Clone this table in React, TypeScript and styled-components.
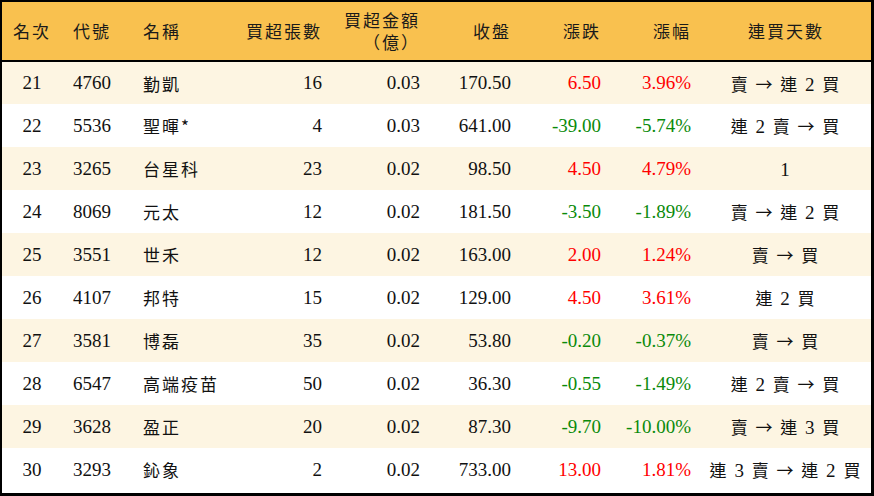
import styled, { createGlobalStyle } from "styled-components";

const GlobalStyle = createGlobalStyle`
    html, body {
        margin: 0;
        padding: 0;
        background: #ffffff;
    }
    body {
        font-family: "Liberation Serif", "Noto Sans CJK TC", serif;
    }
`;

type Align = "left" | "center" | "right";

interface Row {
    rank: number;
    code: string;
    name: string;
    lots: number;
    amount: string;
    close: string;
    change: string;
    pct: string;
    streak: string;
}

const rows: Row[] = [
    { rank: 21, code: "4760", name: "勤凱", lots: 16, amount: "0.03", close: "170.50", change: "6.50", pct: "3.96%", streak: "賣 → 連 2 買" },
    { rank: 22, code: "5536", name: "聖暉*", lots: 4, amount: "0.03", close: "641.00", change: "-39.00", pct: "-5.74%", streak: "連 2 賣 → 買" },
    { rank: 23, code: "3265", name: "台星科", lots: 23, amount: "0.02", close: "98.50", change: "4.50", pct: "4.79%", streak: "1" },
    { rank: 24, code: "8069", name: "元太", lots: 12, amount: "0.02", close: "181.50", change: "-3.50", pct: "-1.89%", streak: "賣 → 連 2 買" },
    { rank: 25, code: "3551", name: "世禾", lots: 12, amount: "0.02", close: "163.00", change: "2.00", pct: "1.24%", streak: "賣 → 買" },
    { rank: 26, code: "4107", name: "邦特", lots: 15, amount: "0.02", close: "129.00", change: "4.50", pct: "3.61%", streak: "連 2 買" },
    { rank: 27, code: "3581", name: "博磊", lots: 35, amount: "0.02", close: "53.80", change: "-0.20", pct: "-0.37%", streak: "賣 → 買" },
    { rank: 28, code: "6547", name: "高端疫苗", lots: 50, amount: "0.02", close: "36.30", change: "-0.55", pct: "-1.49%", streak: "連 2 賣 → 買" },
    { rank: 29, code: "3628", name: "盈正", lots: 20, amount: "0.02", close: "87.30", change: "-9.70", pct: "-10.00%", streak: "賣 → 連 3 買" },
    { rank: 30, code: "3293", name: "鈊象", lots: 2, amount: "0.02", close: "733.00", change: "13.00", pct: "1.81%", streak: "連 3 賣 → 連 2 買" },
];

const columns: { width: number; align: Align; pl: number; pr: number }[] = [
    { width: 60, align: "center", pl: 0, pr: 0 },
    { width: 60, align: "center", pl: 0, pr: 0 },
    { width: 100, align: "left", pl: 21, pr: 0 },
    { width: 110, align: "right", pl: 0, pr: 10 },
    { width: 98, align: "right", pl: 0, pr: 10 },
    { width: 91, align: "right", pl: 0, pr: 10 },
    { width: 90, align: "right", pl: 0, pr: 10 },
    { width: 90, align: "right", pl: 0, pr: 10 },
    { width: 170, align: "center", pl: 0, pr: 0 },
];

const Frame = styled.div`
    width: 874px;
    height: 496px;
    box-sizing: border-box;
    border-style: solid;
    border-color: #000000;
    border-width: 2px 3px 3px 2px;
    overflow: hidden;
`;

const Table = styled.table`
    width: 869px;
    border-collapse: collapse;
    table-layout: fixed;
`;

const HeadRow = styled.tr`
    height: 59px;
    background: #f9c14f;
    border-bottom: 2px solid #000000;
`;

const HeadCell = styled.th<{ $align: Align; $pl: number; $pr: number }>`
    padding: 0 ${(p) => p.$pr}px 0 ${(p) => p.$pl}px;
    text-align: ${(p) => p.$align};
    font-family: "Noto Sans CJK TC", serif;
    font-weight: 400;
    font-size: 17px;
    letter-spacing: 2px;
    line-height: 22px;
    color: #1a1a1a;
    vertical-align: middle;
    white-space: nowrap;
`;

const HeadLine = styled.div`
    display: block;
`;

const BodyRow = styled.tr<{ $alt: boolean }>`
    height: 43px;
    background: ${(p) => (p.$alt ? "#fdf5e2" : "#ffffff")};
`;

const Cell = styled.td<{ $align: Align; $pl: number; $pr: number; $tone?: "up" | "down" }>`
    padding: 0 ${(p) => p.$pr}px 0 ${(p) => p.$pl}px;
    text-align: ${(p) => p.$align};
    font-family: "Liberation Serif", "Noto Sans CJK TC", serif;
    font-size: 19px;
    color: ${(p) => (p.$tone === "up" ? "#ff0000" : p.$tone === "down" ? "#0a8a0a" : "#111111")};
    white-space: nowrap;
    vertical-align: middle;
`;

const CjkText = styled.span`
    font-family: "Noto Sans CJK TC", serif;
    font-size: 17px;
    letter-spacing: 2px;
`;

const StreakNum = styled.span`
    font-family: "Liberation Serif", serif;
    font-size: 19px;
`;

const headers = ["名次", "代號", "名稱", "買超張數", "買超金額\n（億）", "收盤", "漲跌", "漲幅", "連買天數"];

function Streak({ text }: { text: string }) {
    return (
        <CjkText>
            {text.split(/(\d+)/).map((part, i) =>
                /^\d+$/.test(part) ? <StreakNum key={i}>{part}</StreakNum> : part
            )}
        </CjkText>
    );
}

export default function App() {
    const cell = (i: number) => ({ $align: columns[i].align, $pl: columns[i].pl, $pr: columns[i].pr });
    return (
        <>
            <GlobalStyle />
            <Frame>
                <Table>
                    <colgroup>
                        {columns.map((c, i) => (
                            <col key={i} style={{ width: c.width }} />
                        ))}
                    </colgroup>
                    <thead>
                        <HeadRow>
                            {headers.map((h, i) => (
                                <HeadCell key={i} {...cell(i)}>
                                    {h.split("\n").map((line, j) => (
                                        <HeadLine key={j}>{line}</HeadLine>
                                    ))}
                                </HeadCell>
                            ))}
                        </HeadRow>
                    </thead>
                    <tbody>
                        {rows.map((r, idx) => {
                            const tone = r.change.startsWith("-") ? "down" : "up";
                            return (
                                <BodyRow key={r.rank} $alt={idx % 2 === 0}>
                                    <Cell {...cell(0)}>{r.rank}</Cell>
                                    <Cell {...cell(1)}>{r.code}</Cell>
                                    <Cell {...cell(2)}>
                                        <CjkText>{r.name}</CjkText>
                                    </Cell>
                                    <Cell {...cell(3)}>{r.lots}</Cell>
                                    <Cell {...cell(4)}>{r.amount}</Cell>
                                    <Cell {...cell(5)}>{r.close}</Cell>
                                    <Cell {...cell(6)} $tone={tone}>{r.change}</Cell>
                                    <Cell {...cell(7)} $tone={tone}>{r.pct}</Cell>
                                    <Cell {...cell(8)}>
                                        <Streak text={r.streak} />
                                    </Cell>
                                </BodyRow>
                            );
                        })}
                    </tbody>
                </Table>
            </Frame>
        </>
    );
}
